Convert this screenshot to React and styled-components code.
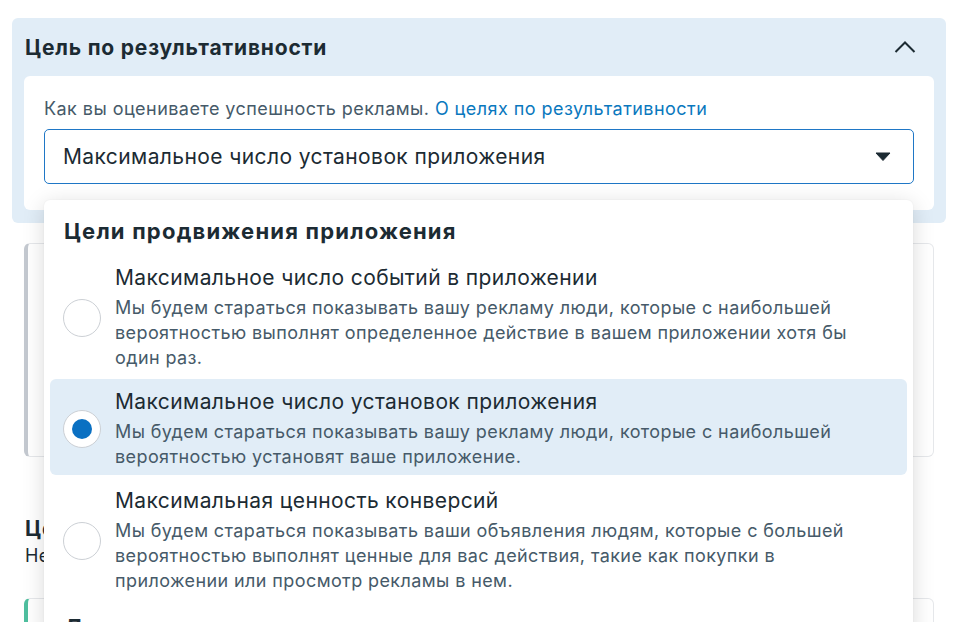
import React from 'react';
import styled, { createGlobalStyle } from 'styled-components';

const GlobalStyle = createGlobalStyle`
  body {
    margin: 0;
    background: #fff;
    font-family: Inter, "Noto Sans", sans-serif;
    color: #1c2b33;
  }
`;

const options = [
  {
    title: 'Максимальное число событий в приложении',
    desc: 'Мы будем стараться показывать вашу рекламу люди, которые с наибольшей вероятностью выполнят определенное действие в вашем приложении хотя бы один раз.',
  },
  {
    title: 'Максимальное число установок приложения',
    desc: 'Мы будем стараться показывать вашу рекламу люди, которые с наибольшей вероятностью установят ваше приложение.',
    selected: true,
  },
  {
    title: 'Максимальная ценность конверсий',
    desc: 'Мы будем стараться показывать ваши объявления людям, которые с большей вероятностью выполнят ценные для вас действия, такие как покупки в приложении или просмотр рекламы в нем.',
  },
];

export default function App() {
  return (
    <Page>
      <GlobalStyle />
      <Panel>
        <PanelHeader>
          <PanelTitle>Цель по результативности</PanelTitle>
          <svg width="22" height="12" viewBox="0 0 22 12" fill="none">
            <path d="M1.5 11 L11 1.5 L20.5 11" stroke="#1c2b33" strokeWidth="2" />
          </svg>
        </PanelHeader>
        <InnerCard>
          <Label>
            Как вы оцениваете успешность рекламы. <Link>О целях по результативности</Link>
          </Label>
          <Select>
            <span>Максимальное число установок приложения</span>
            <svg width="16" height="9" viewBox="0 0 16 9">
              <path d="M1 1 H15 L8 8.5 Z" fill="#1c2b33" stroke="#1c2b33" strokeLinejoin="round" />
            </svg>
          </Select>
        </InnerCard>
      </Panel>

      <Card $accent="#c4c9d0" $height={212} />
      <Section>
        <SectionTitle>Цель конверсии</SectionTitle>
        <SectionText>Не выбрано</SectionText>
      </Section>
      <Card $accent="#4fbf9f" $height={80} />

      <Menu>
        <MenuHeading>Цели продвижения приложения</MenuHeading>
        {options.map(o => (
          <Option key={o.title} $selected={o.selected}>
            <Radio $selected={o.selected} />
            <OptionBody>
              <OptionTitle>{o.title}</OptionTitle>
              <OptionDesc>{o.desc}</OptionDesc>
            </OptionBody>
          </Option>
        ))}
        <MenuHeading>Другие цели</MenuHeading>
      </Menu>
    </Page>
  );
}

const Page = styled.div`
  position: relative;
  height: 622px;
  overflow: hidden;
  padding: 18px 12px 0;
  box-sizing: border-box;
`;

const Panel = styled.div`
  background: #e1edf7;
  border-radius: 6px;
  padding: 0 12px 13px;
`;

const PanelHeader = styled.div`
  display: flex;
  align-items: center;
  justify-content: space-between;
  height: 58px;
  padding: 0 2px 0 1px;
  svg {
    margin-right: 16px;
  }
`;

const PanelTitle = styled.div`
  font-size: 21px;
  font-weight: 700;
  letter-spacing: 0.8px;
`;

const InnerCard = styled.div`
  background: #fff;
  border-radius: 6px;
  padding: 21px 20px 26px;
`;

const Label = styled.div`
  font-size: 18px;
  line-height: 24px;
  letter-spacing: 0.45px;
  color: #465a69;
  margin-bottom: 8px;
`;

const Link = styled.span`
  color: #0a78be;
`;

const Select = styled.div`
  display: flex;
  align-items: center;
  justify-content: space-between;
  height: 55px;
  box-sizing: border-box;
  border: 1px solid #1f77c6;
  border-radius: 5px;
  padding: 0 22px 0 18px;
  font-size: 21px;
  letter-spacing: 0.4px;
  color: #1c2b33;
`;

const Card = styled.div`
  margin: 20px 12px 0;
  height: ${p => p.$height}px;
  background: #fff;
  border-radius: 6px;
  border: 1px solid #e6e8eb;
  border-left: 4px solid ${p => p.$accent};
`;

const Section = styled.div`
  padding: 59px 13px 10px;
`;

const SectionTitle = styled.div`
  font-size: 21px;
  font-weight: 700;
  letter-spacing: 0.8px;
  line-height: 26px;
`;

const SectionText = styled.div`
  font-size: 18px;
  letter-spacing: 0.4px;
  line-height: 24px;
  margin-top: 2px;
`;

const Menu = styled.div`
  position: absolute;
  top: 200px;
  left: 44px;
  width: 869px;
  height: 440px;
  background: #fff;
  border-radius: 6px;
  box-shadow: 0 4px 22px rgba(0, 0, 0, 0.15), 0 0 2px rgba(0, 0, 0, 0.06);
  padding: 18px 6px 0;
  box-sizing: border-box;
`;

const MenuHeading = styled.div`
  font-size: 22px;
  font-weight: 700;
  letter-spacing: 1.2px;
  line-height: 26px;
  padding: 0 14px;
  margin-bottom: 11px;
  margin-top: 15px;
  &:first-child {
    margin-top: 0;
  }
`;

const Option = styled.div`
  display: flex;
  align-items: center;
  gap: 14px;
  padding: 10px 14px 6px 13px;
  margin-bottom: 3px;
  border-radius: 6px;
  background: ${p => (p.$selected ? '#e1edf7' : 'transparent')};
`;

const Radio = styled.div`
  flex: none;
  width: 38px;
  height: 38px;
  box-sizing: border-box;
  border-radius: 50%;
  border: 1px solid #ccd0d5;
  background: #fff;
  display: flex;
  align-items: center;
  justify-content: center;
  &::after {
    content: '';
    display: ${p => (p.$selected ? 'block' : 'none')};
    width: 20px;
    height: 20px;
    border-radius: 50%;
    background: #0a70c2;
  }
`;

const OptionBody = styled.div`
  flex: 1;
`;

const OptionTitle = styled.div`
  font-size: 21px;
  letter-spacing: 0.4px;
  line-height: 26px;
  color: #1c2b33;
`;

const OptionDesc = styled.div`
  font-size: 18px;
  letter-spacing: 0.4px;
  line-height: 25px;
  color: #465a69;
  margin-top: 4px;
  padding-right: 30px;
`;
